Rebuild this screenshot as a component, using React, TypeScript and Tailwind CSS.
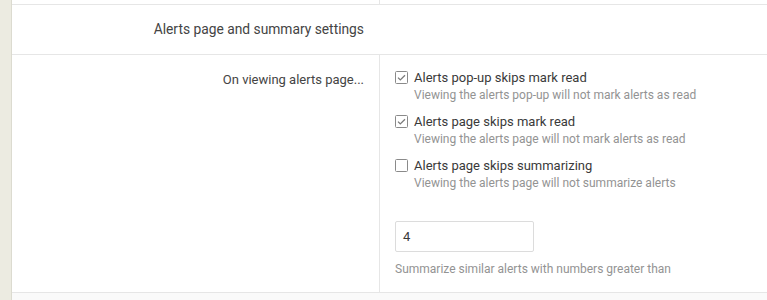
const options = [
  { id: 1, label: "Alerts pop-up skips mark read", hint: "Viewing the alerts pop-up will not mark alerts as read", checked: true },
  { id: 2, label: "Alerts page skips mark read", hint: "Viewing the alerts page will not mark alerts as read", checked: true },
  { id: 3, label: "Alerts page skips summarizing", hint: "Viewing the alerts page will not summarize alerts", checked: false },
];

function Box({ checked }: { checked: boolean }) {
  return (
    <svg width="13" height="13" viewBox="0 0 13 13" className="shrink-0 mt-[3px]">
      <rect x="0.5" y="0.5" width="12" height="12" rx="1" fill="#fff" stroke="#8a8a8a" />
      {checked && (
        <path d="M3 6.6l2.3 2.3L10 4.2" fill="none" stroke="#7a7a7a" strokeWidth="1.3" />
      )}
    </svg>
  );
}

export default function App() {
  return (
    <div className="w-[767px] h-[300px] flex bg-white overflow-hidden" style={{ fontFamily: "Roboto, 'Liberation Sans', sans-serif" }}>
      {/* side strip */}
      <div className="w-[12px] shrink-0 bg-[#ecebe1] border-r border-[#dcdbd0]" />

      <div className="flex-1 flex flex-col">
        {/* previous row tail */}
        <div className="flex h-[5px] border-b border-[#e6e6e6]">
          <div className="w-[367px]" />
          <div className="flex-1 border-l border-[#e6e6e6]" />
        </div>

        {/* section header */}
        <div className="h-[50px] flex items-center border-b border-[#e6e6e6]">
          <div className="w-[367px] pr-[15px] text-right text-[13.8px] text-[#444]">
            Alerts page and summary settings
          </div>
        </div>

        {/* form row */}
        <div className="flex border-b border-[#e6e6e6]">
          <div className="w-[367px] pr-[15px] pt-[15px] text-right text-[13px] leading-[19px] text-[#444]">
            On viewing alerts page...
          </div>
          <div className="flex-1 border-l border-[#e6e6e6] pl-[15px] pt-[13px] pb-[14px]">
            <div className="flex flex-col gap-[8px]">
              {options.map((o) => (
                <div key={o.id} className="flex gap-[6px]">
                  <Box checked={o.checked} />
                  <div className="flex flex-col">
                    <span className="text-[13px] leading-[19px] text-[#3a3a3a]">{o.label}</span>
                    <span className="text-[12px] leading-[17px] text-[#939393]">{o.hint}</span>
                  </div>
                </div>
              ))}
            </div>

            <div className="mt-[29px] w-[139px] h-[31px] border border-[#dcdcdc] rounded-[2px] flex items-center px-[7px] text-[13px] text-[#3a3a3a]">
              4
            </div>
            <div className="mt-[9px] text-[12px] leading-[17px] text-[#939393]">
              Summarize similar alerts with numbers greater than
            </div>
          </div>
        </div>

        <div className="flex-1 bg-[#fafafa]" />
      </div>
    </div>
  );
}
